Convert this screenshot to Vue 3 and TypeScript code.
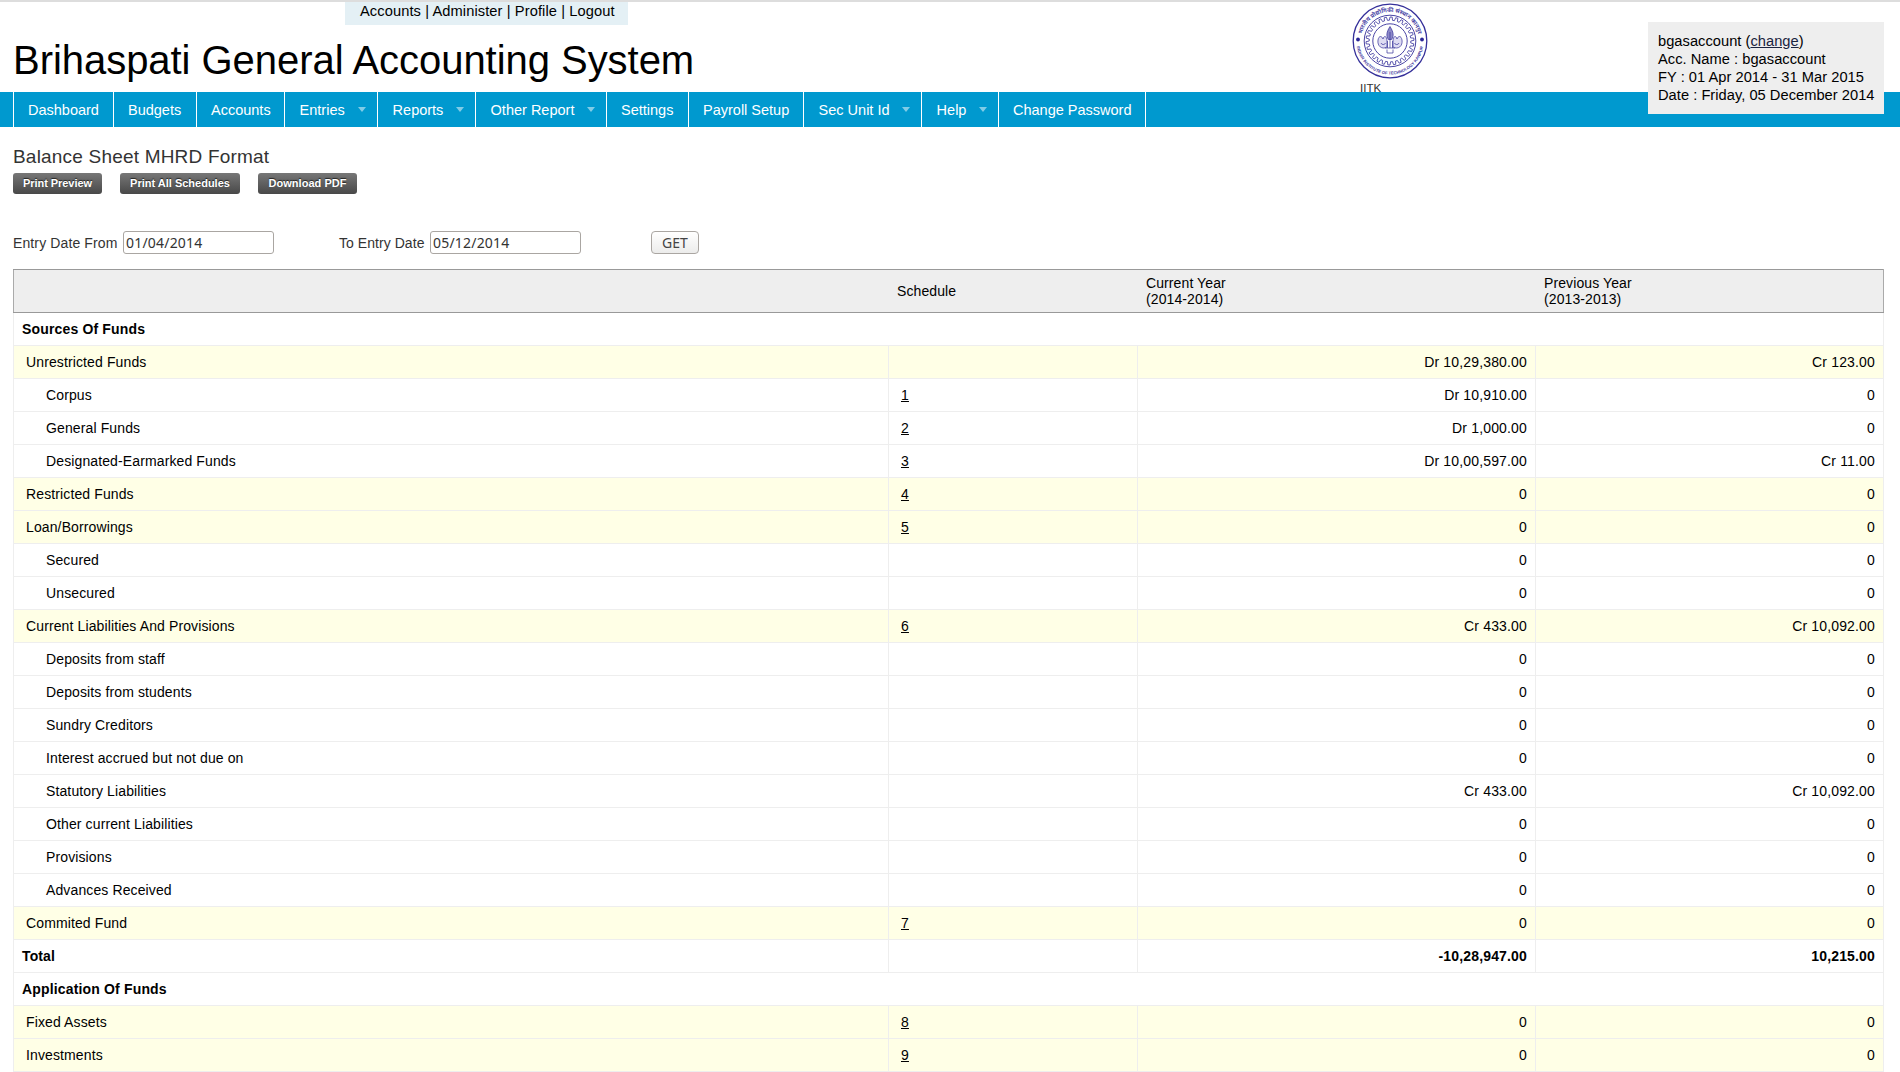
<script setup lang="ts">
interface MenuItem {
  label: string
  width: number
  sub?: boolean
}

interface Row {
  kind: 'head' | 'group' | 'child' | 'total'
  label: string
  schedule?: string
  current?: string
  previous?: string
}

const menu: MenuItem[] = [
  { label: 'Dashboard', width: 100 },
  { label: 'Budgets', width: 83 },
  { label: 'Accounts', width: 88 },
  { label: 'Entries', width: 93, sub: true },
  { label: 'Reports', width: 98, sub: true },
  { label: 'Other Report', width: 131, sub: true },
  { label: 'Settings', width: 82 },
  { label: 'Payroll Setup', width: 115 },
  { label: 'Sec Unit Id', width: 118, sub: true },
  { label: 'Help', width: 77, sub: true },
  { label: 'Change Password', width: 148 },
]

function row(kind: Row['kind'], label: string, schedule = '', current = '0', previous = '0'): Row {
  return { kind, label, schedule, current, previous }
}

const rows: Row[] = [
  { kind: 'head', label: 'Sources Of Funds' },
  row('group', 'Unrestricted Funds', '', 'Dr 10,29,380.00', 'Cr 123.00'),
  row('child', 'Corpus', '1', 'Dr 10,910.00'),
  row('child', 'General Funds', '2', 'Dr 1,000.00'),
  row('child', 'Designated-Earmarked Funds', '3', 'Dr 10,00,597.00', 'Cr 11.00'),
  row('group', 'Restricted Funds', '4'),
  row('group', 'Loan/Borrowings', '5'),
  row('child', 'Secured'),
  row('child', 'Unsecured'),
  row('group', 'Current Liabilities And Provisions', '6', 'Cr 433.00', 'Cr 10,092.00'),
  row('child', 'Deposits from staff'),
  row('child', 'Deposits from students'),
  row('child', 'Sundry Creditors'),
  row('child', 'Interest accrued but not due on'),
  row('child', 'Statutory Liabilities', '', 'Cr 433.00', 'Cr 10,092.00'),
  row('child', 'Other current Liabilities'),
  row('child', 'Provisions'),
  row('child', 'Advances Received'),
  row('group', 'Commited Fund', '7'),
  row('total', 'Total', '', '-10,28,947.00', '10,215.00'),
  { kind: 'head', label: 'Application Of Funds' },
  row('group', 'Fixed Assets', '8'),
  row('group', 'Investments', '9'),
]

// Toothed ring of the institute seal
function gear(teeth: number, inner: number, outer: number): string {
  const points: string[] = []
  const step = (Math.PI * 2) / teeth
  const offsets: [number, number][] = [[0, inner], [0.38, inner], [0.5, outer], [0.88, outer]]
  for (let i = 0; i < teeth; i++) {
    for (const [o, r] of offsets) {
      const a = (i + o) * step
      points.push(`${(Math.cos(a) * r).toFixed(2)},${(Math.sin(a) * r).toFixed(2)}`)
    }
  }
  return points.join(' ')
}
const gearPoints = gear(26, 20.8, 24)
</script>

<template>
  <div class="page">
    <header class="header">
      <nav class="admin-links">
        <a>Accounts</a> | <a>Administer</a> | <a>Profile</a> | <a>Logout</a>
      </nav>
      <h1 class="title">Brihaspati General Accounting System</h1>
      <div class="seal">
        <svg viewBox="-38 -38 76 76" width="76" height="76">
          <defs>
            <path id="arc-top" d="M-29 0A29 29 0 0 1 29 0" />
            <path id="arc-bottom" d="M-33.6 0A33.6 33.6 0 0 0 33.6 0" />
          </defs>
          <g fill="none" stroke="#35309a">
            <circle r="36.8" stroke-width="1.3" />
            <circle r="25.8" stroke-width="0.9" />
            <polygon :points="gearPoints" stroke-width="0.8" />
            <circle r="17.2" stroke-width="0.9" />
            <g stroke-width="0.7" stroke-linejoin="round">
              <path d="M0-14.5C-3.5-9-4.2-5-1.5-1.5H1.5C4.2-5 3.5-9 0-14.5Z" fill="#8d89c8" />
              <path d="M0-9V7M-2.5 0V7M2.5 0V7" />
              <path d="M-3 6C-8 9-13 5-12-1C-11-6-8-5-7-2C-6-6-3-5-3 0ZM3 6C8 9 13 5 12-1C11-6 8-5 7-2C6-6 3-5 3 0Z" fill="#dedcf2" />
              <path d="M-9 2A2.4 2.4 0 0 0-4.5 2M9 2A2.4 2.4 0 0 1 4.5 2M-5 7H5M-3 8.5V12H3V8.5" />
            </g>
          </g>
          <circle cx="-32" cy="-1.5" r="1.9" fill="#2b2696" />
          <circle cx="32" cy="-1.5" r="1.9" fill="#2b2696" />
          <text class="seal-hindi"><textPath href="#arc-top" startOffset="50%" text-anchor="middle">भारतीय प्रौद्योगिकी संस्थान कानपुर</textPath></text>
          <text class="seal-english"><textPath href="#arc-bottom" startOffset="50%" text-anchor="middle">INDIAN INSTITUTE OF TECHNOLOGY KANPUR</textPath></text>
        </svg>
        <span class="seal-name">IITK</span>
      </div>
      <div class="account-info">
        <div>bgasaccount (<a class="change">change</a>)</div>
        <div>Acc. Name : bgasaccount</div>
        <div>FY : 01 Apr 2014 - 31 Mar 2015</div>
        <div>Date : Friday, 05 December 2014</div>
      </div>
    </header>

    <ul class="menu">
      <li v-for="item in menu" :key="item.label" :class="{ sub: item.sub }" :style="{ width: item.width + 'px' }">
        <span>{{ item.label }}</span>
        <i v-if="item.sub" class="arrow"></i>
      </li>
    </ul>

    <main class="content">
      <h2 class="subtitle">Balance Sheet MHRD Format</h2>
      <div class="actions">
        <a class="action preview">Print Preview</a>
        <a class="action schedules">Print All Schedules</a>
        <a class="action pdf">Download PDF</a>
      </div>

      <form class="filter" @submit.prevent>
        <label class="from">Entry Date From</label>
        <input type="text" value="01/04/2014" />
        <label class="to">To Entry Date</label>
        <input type="text" value="05/12/2014" />
        <button type="submit">GET</button>
      </form>

      <table class="sheet">
        <colgroup>
          <col class="c-label" />
          <col class="c-schedule" />
          <col class="c-current" />
          <col class="c-previous" />
        </colgroup>
        <thead>
          <tr>
            <th></th>
            <th>Schedule</th>
            <th>Current Year<br />(2014-2014)</th>
            <th>Previous Year<br />(2013-2013)</th>
          </tr>
        </thead>
        <tbody>
          <tr v-for="r in rows" :key="r.label" :class="r.kind">
            <td v-if="r.kind === 'head'" colspan="4">{{ r.label }}</td>
            <template v-else>
              <td class="label">{{ r.label }}</td>
              <td class="schedule"><a v-if="r.schedule">{{ r.schedule }}</a></td>
              <td class="amount">{{ r.current }}</td>
              <td class="amount">{{ r.previous }}</td>
            </template>
          </tr>
        </tbody>
      </table>
    </main>
  </div>
</template>

<style>
body {
  margin: 0;
  background: #fff;
  overflow: hidden;
}
</style>

<style scoped>
.page {
  box-sizing: border-box;
  height: 1072px;
  overflow: hidden;
  border-top: 2px solid #ddd;
  font-family: "Liberation Sans", Arial, sans-serif;
  font-size: 14px;
  color: #000;
}

.header {
  position: relative;
  height: 90px;
}

.admin-links {
  box-sizing: border-box;
  width: 283px;
  height: 23px;
  margin-left: 345px;
  padding-left: 15px;
  background: #e4f0f5;
  font-size: 14.67px;
  line-height: 18px;
  letter-spacing: 0.09px;
  white-space: nowrap;
}

.title {
  margin: 11px 0 0 13px;
  font-size: 40px;
  font-weight: normal;
  line-height: 48px;
  letter-spacing: -0.04px;
}

.seal {
  position: absolute;
  left: 1352px;
  top: 1px;
  width: 76px;
}

.seal svg {
  display: block;
}

.seal-hindi {
  font-family: "Noto Sans Devanagari", "Noto Sans", sans-serif;
  font-size: 5.8px;
  font-weight: bold;
  fill: #4a45a6;
}

.seal-english {
  font-size: 4.2px;
  font-weight: bold;
  fill: #3d38a0;
}

.seal-name {
  display: block;
  padding-left: 8px;
  margin-top: 2px;
  color: #333;
  font-size: 11.5px;
  line-height: 14px;
}

.account-info {
  position: absolute;
  z-index: 1;
  left: 1648px;
  top: 20px;
  box-sizing: border-box;
  width: 236px;
  height: 92px;
  padding: 10px;
  background: #eee;
  font-size: 14.67px;
  line-height: 18px;
  letter-spacing: 0.03px;
  white-space: nowrap;
}

.change {
  color: #1a2440;
  text-decoration: underline;
}

.menu {
  display: flex;
  height: 35px;
  margin: 0;
  padding: 0 0 0 13px;
  background: #0099cf;
  color: #fff;
  font-size: 14.5px;
  list-style: none;
}

.menu li {
  box-sizing: border-box;
  display: flex;
  align-items: center;
  justify-content: space-between;
  padding: 0 11.5px 0 14px;
  border-left: 1px solid #fff;
  white-space: nowrap;
}

.menu li.sub {
  padding-left: 14.6px;
}

.menu li:last-child {
  border-right: 1px solid #fff;
}

.arrow {
  border: 4.5px solid transparent;
  border-top: 5px solid #80cce7;
  border-bottom: 0;
}

.content {
  padding: 0 16px 0 13px;
}

.subtitle {
  margin: 0;
  padding-top: 18px;
  height: 28px;
  color: #333;
  font-size: 19px;
  font-weight: normal;
  line-height: 24px;
  letter-spacing: 0.2px;
}

.actions {
  display: flex;
  gap: 18px;
}

.action {
  box-sizing: border-box;
  height: 21px;
  border-radius: 3px;
  background: linear-gradient(#777, #484848);
  color: #fff;
  font-size: 11px;
  font-weight: bold;
  line-height: 20px;
  letter-spacing: -0.06px;
  text-align: center;
  text-shadow: 0 -1px 1px #222;
}

.preview {
  width: 89px;
}

.schedules {
  width: 120px;
  letter-spacing: 0;
}

.pdf {
  width: 99px;
  letter-spacing: 0.03px;
}

.filter {
  display: flex;
  height: 23px;
  margin: 37px 0 15px;
  color: #333;
  line-height: 25px;
}

.from {
  width: 110px;
}

.to {
  width: 91px;
  margin-left: 65px;
}

.filter label {
  letter-spacing: 0.12px;
  white-space: nowrap;
}

.filter .to {
  letter-spacing: 0.05px;
}

.filter input {
  box-sizing: border-box;
  width: 151px;
  height: 23px;
  margin: 0;
  padding: 0 2px;
  border: 1px solid #aaa6a2;
  border-radius: 3px;
  outline: 0;
  background: #fff;
  color: #333;
  font: 14px "Noto Sans", sans-serif;
  letter-spacing: 0.2px;
}

.filter button {
  box-sizing: border-box;
  width: 48px;
  height: 23px;
  margin: 0 0 0 70px;
  padding: 0;
  border: 1px solid #aaa6a2;
  border-radius: 4px;
  background: linear-gradient(#fff, #ececeb);
  color: #444;
  font: 14px "Noto Sans", sans-serif;
}

.sheet {
  width: 1871px;
  table-layout: fixed;
  border-collapse: collapse;
  letter-spacing: 0.16px;
}

.c-label {
  width: 875px;
}

.c-schedule {
  width: 249px;
}

.c-current {
  width: 398px;
}

.sheet thead {
  background: #eee;
}

.sheet thead tr {
  height: 43px;
}

.sheet th {
  padding: 0 8.5px;
  border-top: 1px solid #999;
  border-bottom: 1px solid #999;
  font-weight: normal;
  line-height: 16px;
  letter-spacing: 0.1px;
  text-align: left;
}

.sheet th:first-child {
  border-left: 1px solid #aaa;
}

.sheet th:last-child {
  border-right: 1px solid #aaa;
}

.sheet tbody tr {
  height: 33px;
}

.sheet td {
  padding: 0 8px;
  border: 1px solid #eee;
  line-height: 16px;
}

.head,
.total {
  font-weight: bold;
}

.group {
  background: #ffffe6;
}

.sheet .label {
  letter-spacing: 0.12px;
}

.group .label {
  padding-left: 12px;
}

.child .label {
  padding-left: 32px;
}

.sheet .schedule {
  padding-left: 12px;
}

.schedule a {
  text-decoration: underline;
}

.sheet .amount {
  text-align: right;
}
</style>
